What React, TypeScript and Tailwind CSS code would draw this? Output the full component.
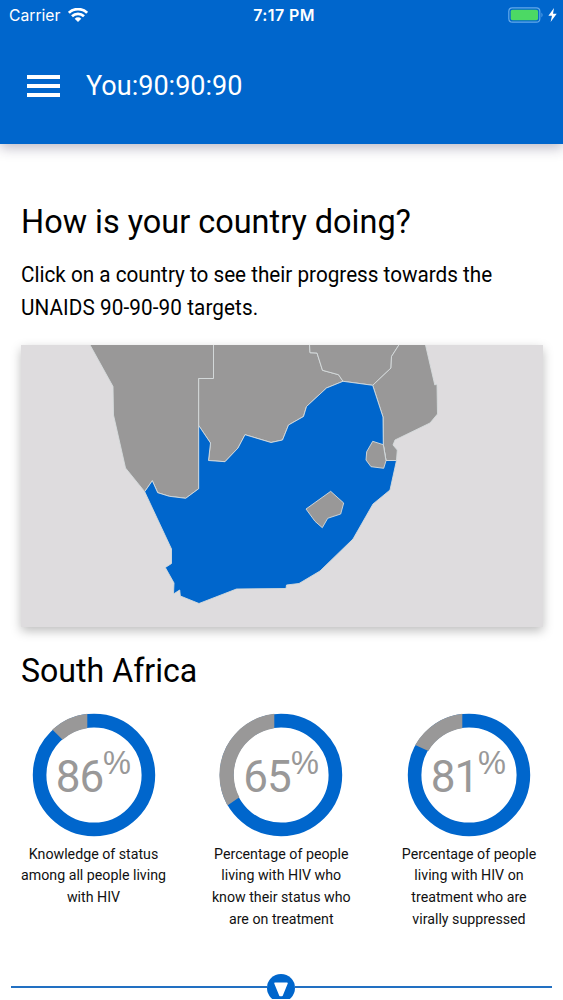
import React from 'react'

type Country = {
    name: string
    outline: string
}

type Stat = {
    value: number
    lines: string[]
    // remaining share of the ring, clockwise up to the top
    rest: string
}

const NEIGHBOURS: Country[] = [
    {
        name: 'Namibia',
        outline: '89.5,344 113,386.5 113.5,415 125.5,468 144.7,491.7 152.3,480.7 157.7,492.7 169.3,496.3 185.7,498.3 198.7,488.7 198.7,378.5 213.5,378.5 213.5,344',
    },
    {
        name: 'Botswana',
        outline: '213.5,344 213.5,378.5 198.7,378.5 198.7,425.5 210.5,443 208.5,460.5 225,461.7 238,448 245,434.7 271,442.5 282.5,440 288.5,425 303.5,416.5 306.5,406.5 326.5,388 343,381.3 338.5,374.7 322.5,370.3 317,353 310,352.7 309.5,344',
    },
    {
        name: 'Zimbabwe',
        outline: '309.5,344 310,352.7 317,353 322.5,370.3 338.5,374.7 343,381.3 372.7,385.3 391,368 391.5,356.5 399.5,344',
    },
    {
        name: 'Mozambique',
        outline: '399.5,344 391.5,356.5 391,368 372.7,385.3 383,417 383.3,444.7 386,460.5 396.5,460.5 397.3,450 393,445 395,440 430,423 437.5,414 437,384 434.8,385 425.3,344',
    },
]

const SOUTH_AFRICA =
    '144.7,491.7 152.3,480.7 157.7,492.7 169.3,496.3 185.7,498.3 198.7,488.7 198.7,425.5 210.5,443 208.5,460.5 225,461.7 238,448 245,434.7 271,442.5 282.5,440 288.5,425 303.5,416.5 306.5,406.5 326.5,388 343,381.3 372.7,385.3 383,417 383.3,444.7 386,460.5 396.5,460.5 390,490 373,504 353,539 320,571 299,583.5 286.5,585 286,588.5 236.5,589 199,603.5 180.3,596 179.7,590 173.5,594 174,583 165.3,567.5 171.5,563.5 171.5,549'

const ENCLAVES: Country[] = [
    { name: 'Swaziland', outline: '372.7,441.3 383.3,444.7 386,460.7 383.7,468.3 371,466.7 366,460 366.7,451.7' },
    { name: 'Lesotho', outline: '306,509 330.7,491.3 343.7,503 340.7,514 327.7,518.3 322.3,527.7 315,521.3' },
]

const STATS: Stat[] = [
    {
        value: 86,
        lines: ['Knowledge of status', 'among all people living', 'with HIV'],
        rest: 'M-41.7,-45.4 A61.6,61.6 0 0 1 -6.7,-61.2 L-6.7,-46.7 A47.2,47.2 0 0 0 -31.4,-35.2 Z',
    },
    {
        value: 65,
        lines: ['Percentage of people', 'living with HIV who', 'know their status who', 'are on treatment'],
        rest: 'M-53.6,30.4 A61.6,61.6 0 0 1 -6.7,-61.2 L-6.7,-46.7 A47.2,47.2 0 0 0 -41.6,22.3 Z',
    },
    {
        value: 81,
        lines: ['Percentage of people', 'living with HIV on', 'treatment who are', 'virally suppressed'],
        rest: 'M-53.8,-30 A61.6,61.6 0 0 1 -6.7,-61.2 L-6.7,-46.7 A47.2,47.2 0 0 0 -40.6,-24 Z',
    },
]

function StatusBar() {
    return (
        <div className="grid h-[29px] grid-cols-3 items-center px-[9px] font-['Inter'] text-[16px] leading-none">
            <div className="flex items-center gap-[7px]">
                <span className="origin-left scale-x-[0.98]">Carrier</span>
                <svg width="20" height="14" viewBox="0 0 20 14" fill="none" stroke="currentColor" strokeWidth="2.7">
                    <path d="M0.9 4.8 A13 13 0 0 1 19.1 4.8" />
                    <path d="M4 8.3 A8.6 8.6 0 0 1 16 8.3" />
                    <path d="M10 14 L6.7 10.7 A4.7 4.7 0 0 1 13.3 10.7 Z" fill="currentColor" stroke="none" />
                </svg>
            </div>
            <span className="pl-[5px] text-center text-[16px] font-semibold tracking-[0.4px]">7:17 PM</span>
            <div className="-mr-[3px] flex items-center justify-end gap-[4px]">
                <svg width="36" height="16" viewBox="0 0 36 16">
                    <rect x="0.8" y="0.8" width="31" height="14.4" rx="3.5" fill="none" stroke="#62a9ea" strokeWidth="1.2" />
                    <rect x="2.7" y="2.8" width="27.4" height="10.4" rx="1.8" fill="#4cd964" />
                    <path d="M33.5 5.5 Q35.5 8 33.5 10.5 Z" fill="#62a9ea" />
                </svg>
                <svg width="9" height="14" viewBox="0 0 9 14" fill="currentColor">
                    <path d="M6 0 L0.4 7.8 H4 L2.6 14 L8.7 5.7 H5 Z" />
                </svg>
            </div>
        </div>
    )
}

function Header() {
    return (
        <header className="h-[144px] bg-[#0066cc] text-white shadow-[0_4px_12px_rgba(40,30,70,0.3)]">
            <StatusBar />
            <div className="flex h-[114px] items-center pl-[27px]">
                <button className="flex w-[33px] flex-col gap-[5px]" aria-label="Menu">
                    <span className="h-[4px] w-full bg-white" />
                    <span className="h-[4px] w-full bg-white" />
                    <span className="h-[4px] w-full bg-white" />
                </button>
                <h1 className="ml-[26px] origin-left scale-x-[0.965] text-[28px]">You:90:90:90</h1>
            </div>
        </header>
    )
}

function CountryMap() {
    return (
        <svg
            className="mt-[21px] block h-[282px] w-[522px] bg-[#dedcde] shadow-[0_4px_10px_rgba(0,0,0,0.26)]"
            viewBox="21 345 522 282"
        >
            <g fill="#999898" stroke="#d6dbdd" strokeWidth="0.9" strokeLinejoin="round">
                {NEIGHBOURS.map(c => <polygon key={c.name} points={c.outline} />)}
                <polygon points={SOUTH_AFRICA} fill="#0066cc" />
                {ENCLAVES.map(c => <polygon key={c.name} points={c.outline} />)}
            </g>
        </svg>
    )
}

function StatRing({ stat }: { stat: Stat }) {
    return (
        <div className="flex flex-col items-center">
            <div className="relative h-[124px] w-[124px]">
                <svg width="124" height="124" viewBox="-62 -62 124 124">
                    <circle r="54.4" fill="none" stroke="#0066cc" strokeWidth="13.6" />
                    <path d={stat.rest} fill="#999898" />
                </svg>
                <div className="absolute inset-0 flex items-start justify-center text-[#999898]">
                    <span className="mt-[38px] text-[44px] leading-[52px] tracking-[-1px]">{stat.value}</span>
                    <span className="-mr-[1px] mt-[30px] origin-left scale-x-[0.95] font-['Liberation_Sans'] text-[33px] leading-[40px]">%</span>
                </div>
            </div>
            <p className="mt-[6.5px] scale-x-[0.947] text-center text-[15px] leading-[21.8px] text-[#111]">
                {stat.lines.map(line => <span key={line} className="block whitespace-nowrap">{line}</span>)}
            </p>
        </div>
    )
}

function BottomDivider() {
    return (
        <div className="mx-[11px] mt-auto mb-px flex h-[26px] items-start">
            <div className="mt-[13px] h-[1.5px] w-[256px] bg-[#2270c2]" />
            <svg className="shrink-0" width="28" height="26" viewBox="0 0 28 26">
                <circle cx="14" cy="15" r="14" fill="#0066cc" />
                <path d="M8 10.2 H20 L15 22.4 H13 Z" fill="#fff" stroke="#fff" strokeWidth="1.6" strokeLinejoin="round" />
            </svg>
            <div className="mt-[13px] h-[1.5px] flex-1 bg-[#2270c2]" />
        </div>
    )
}

export default function App() {
    return (
        <div className="flex h-[1000px] w-[563px] flex-col overflow-hidden bg-white font-['Roboto','Liberation_Sans',sans-serif] text-black">
            <Header />
            <main className="pl-[20.5px]">
                <h2 className="mt-[56px] origin-left scale-x-[0.954] text-[34px] leading-[42px]">How is your country doing?</h2>
                <p className="mt-[16px] origin-left scale-x-[0.94] text-[22px] leading-[33px] whitespace-nowrap">
                    Click on a country to see their progress towards the
                    <br />
                    <span className="tracking-[0.1px]">UNAIDS 90-90-90 targets.</span>
                </p>
                <CountryMap />
                <h2 className="mt-[22px] origin-left scale-x-[0.944] text-[34px] leading-[42px]">South Africa</h2>
            </main>
            <section className="mt-[22px] grid w-[562.5px] grid-cols-3">
                {STATS.map(stat => <StatRing key={stat.value} stat={stat} />)}
            </section>
            <BottomDivider />
        </div>
    )
}
